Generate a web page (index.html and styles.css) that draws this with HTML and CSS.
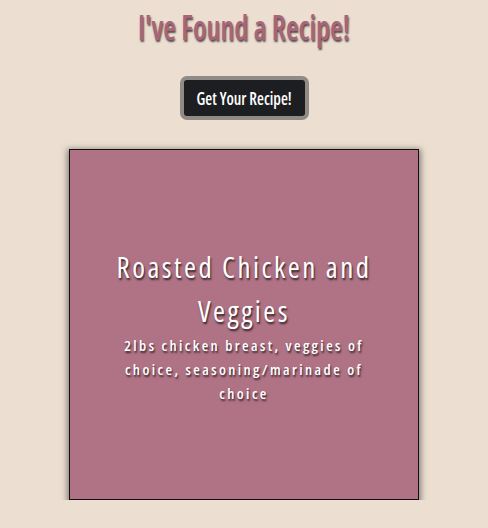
FILE: index.html
```html
<!DOCTYPE html>
<html lang="en">
<head>
<meta charset="utf-8">
<title>Recipe</title>
<link rel="stylesheet" href="styles.css">
</head>
<body>
<main class="page">
  <h1 class="title"><span class="title-text">I've Found a Recipe!</span></h1>
  <button class="btn" type="button"><span class="btn-text">Get Your Recipe!</span></button>
  <section class="card">
    <h2 class="card-title">Roasted Chicken and Veggies</h2>
    <p class="card-desc">2lbs chicken breast, veggies of choice, seasoning/marinade of choice</p>
  </section>
</main>
</body>
</html>
```
FILE: styles.css
```css
html, body {
  margin: 0;
  padding: 0;
  background: #ecdfd2;
}
body {
  font-family: "Open Sans", "Noto Sans", sans-serif;
  font-stretch: condensed;
}
.page {
  display: flex;
  flex-direction: column;
  align-items: center;
  padding-top: 7px;
}
.title {
  margin: 0;
  height: 40px;
  font-size: 35px;
  line-height: 40px;
  font-weight: 600;
  color: #a8657a;
  text-shadow: 1px 2px 2px rgba(50, 35, 35, 0.8);
  white-space: nowrap;
}
.title-text {
  display: inline-block;
  transform: scaleX(0.835);
}
.btn {
  margin-top: 29px;
  width: 129px;
  height: 44px;
  background: #1c1e21;
  color: #fff;
  border: 4px solid #918b86;
  border-radius: 7px;
  font-family: inherit;
  font-stretch: condensed;
  font-weight: 600;
  font-size: 18px;
  padding: 0;
  white-space: nowrap;
}
.btn-text {
  display: inline-block;
  transform: scaleX(0.88);
}
.card {
  margin-top: 29px;
  width: 350px;
  height: 351px;
  box-sizing: border-box;
  background: #b07386;
  border: 1px solid #111;
  box-shadow: 0 2px 6px 2px rgba(60, 50, 45, 0.55);
  display: flex;
  flex-direction: column;
  justify-content: center;
  align-items: center;
  text-align: center;
  padding: 0 38px;
  color: #fff;
}
.card-title {
  margin: 0 -20px;
  font-size: 29px;
  line-height: 44px;
  font-weight: 400;
  letter-spacing: 2.5px;
  text-shadow: 1px 2px 2px rgba(40, 25, 30, 0.9);
}
.card-desc {
  margin: 0;
  font-size: 15px;
  line-height: 24px;
  letter-spacing: 2.4px;
  font-weight: 600;
  text-shadow: 1px 2px 2px rgba(40, 25, 30, 0.9);
}
```
